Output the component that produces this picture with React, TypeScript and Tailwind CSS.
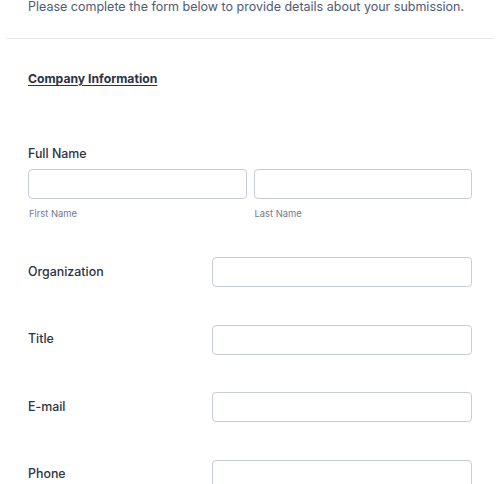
const font = { fontFamily: "Inter, 'Noto Sans', sans-serif" };

function Field({ label }: { label: string }) {
  return (
    <div className="flex items-center h-[30px]">
      <label className="w-[184px] shrink-0 text-[12.4px] font-[450] text-[#2c3345]">{label}</label>
      <input
        type="text"
        className="w-[260px] h-[30px] rounded-[4px] border border-[#c8ccd8] bg-white outline-none"
      />
    </div>
  );
}

export default function App() {
  return (
    <div className="w-[500px] h-[484px] overflow-hidden bg-white" style={font}>
      <div className="px-[6px]">
        <div className="border-b border-[#e7e9ee] pl-[22px] -mt-[3px] pb-[21px]">
          <p className="text-[12.5px] leading-[20px] text-[#4f5b73]">
            Please complete the form below to provide details about your submission.
          </p>
        </div>
      </div>

      <div className="px-[28px]">
        <h2 className="mt-[31px] text-[12.2px] leading-[18px] font-bold text-[#2c3345] underline underline-offset-2">
          Company Information
        </h2>

        <div className="mt-[57px]">
          <label className="block text-[12.4px] leading-[18px] font-[450] text-[#2c3345]">Full Name</label>
          <div className="mt-[6px] grid grid-cols-2 gap-[7px]">
            <div>
              <input
                type="text"
                className="w-full h-[30px] rounded-[4px] border border-[#c8ccd8] bg-white outline-none"
              />
              <div className="mt-[9px] pl-[1px] text-[9.4px] leading-[12px] text-[#6f7a90]">First Name</div>
            </div>
            <div>
              <input
                type="text"
                className="w-full h-[30px] rounded-[4px] border border-[#c8ccd8] bg-white outline-none"
              />
              <div className="mt-[9px] pl-[1px] text-[9.4px] leading-[12px] text-[#6f7a90]">Last Name</div>
            </div>
          </div>
        </div>

        <div className="mt-[37px] flex flex-col gap-[37.6px]">
          <Field label="Organization" />
          <Field label="Title" />
          <Field label="E-mail" />
          <Field label="Phone" />
        </div>
      </div>
    </div>
  );
}
